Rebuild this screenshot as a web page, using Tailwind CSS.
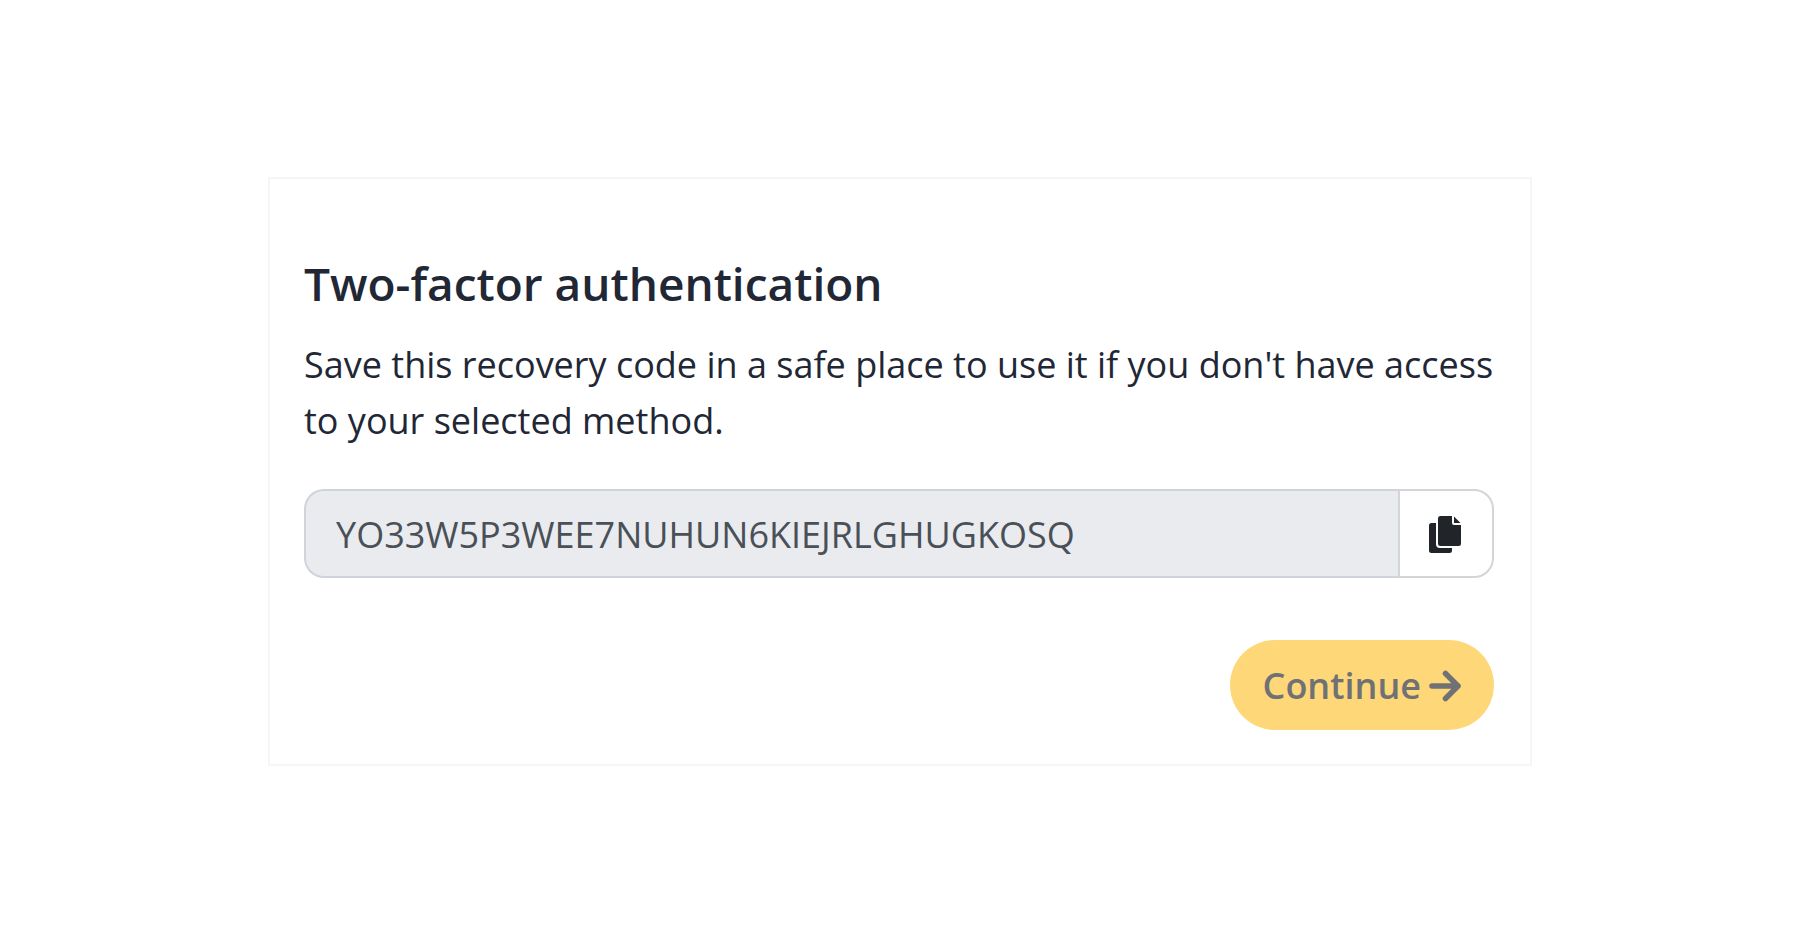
<!DOCTYPE html>
<html lang="en">
<head>
    <meta charset="UTF-8">
    <meta name="viewport" content="width=device-width, initial-scale=1.0">
    <title>Two-factor authentication</title>
    <!-- TailwindCSS -->
    <script src="https://cdn.jsdelivr.net/npm/@tailwindcss/browser@4"></script>
</head>
<body class="min-h-screen bg-white font-['Open_Sans','Noto_Sans',sans-serif] text-[#212735]">
    <main class="mx-auto max-w-[1264px] pt-[177px]">
        <form class="border-2 border-[#f6f6f6] pt-[76px] pr-9 pb-[34px] pl-[34px]">
            <h1 class="text-[46px] leading-[56px] font-semibold">Two-factor authentication</h1>
            <p class="mt-[26px] text-[36px] leading-[56px]">Save this recovery code in a safe place to use it if you don't have access to your selected method.</p>

            <!-- Recovery code -->
            <div class="mt-10 flex h-[89px]">
                <input type="text" id="code" name="code" aria-label="Recovery code" readonly value="YO33W5P3WEE7NUHUN6KIEJRLGHUGKOSQ"
                       class="min-w-0 flex-1 rounded-l-[20px] border-2 border-r-0 border-[#ced4da] bg-[#e9ebef] pt-0.5 pl-[30px] text-[36px] text-[#495057] outline-none">
                <button type="button" id="copy" aria-label="Copy"
                        class="flex w-24 items-center justify-center rounded-r-[20px] border-2 border-[#d3d5d7] bg-white pt-0.5 pr-0.5 text-[#212529]">
                    <svg class="h-[37px] w-8" viewBox="0 0 32 37" fill="currentColor">
                        <path d="M11 0H23V7Q23 9 25 9H32V27.500Q32 30 29.500 30H11.500Q9 30 9 27.500V2.500Q9 0 11.500 0Z" />
                        <path d="M25 0.500L31.500 7H25Z" />
                        <path d="M2.500 7H7V28Q7 32 11 32H23V34.500Q23 37 20.500 37H2.500Q0 37 0 34.500V9.500Q0 7 2.500 7Z" />
                    </svg>
                </button>
            </div>

            <!-- Submit -->
            <div class="mt-[62px] flex justify-end">
                <button type="submit" disabled
                        class="flex h-[90px] items-center gap-2 rounded-full bg-[#fed778] px-[33px] pt-0.5 text-[36px] font-semibold text-[#6f7175]">
                    Continue
                    <svg class="h-8 w-8" viewBox="0 0 32 32" fill="none" stroke="currentColor" stroke-width="5.500" stroke-linecap="round" stroke-linejoin="round">
                        <path d="M3 16H29M16.500 3.500L29 16L16.500 28.500" />
                    </svg>
                </button>
            </div>
        </form>
    </main>

    <script>
        document.getElementById('copy').addEventListener('click', async () => {
            await navigator.clipboard.writeText(document.getElementById('code').value);
            document.querySelector('button[type="submit"]').disabled = false;
        });
    </script>
</body>
</html>
